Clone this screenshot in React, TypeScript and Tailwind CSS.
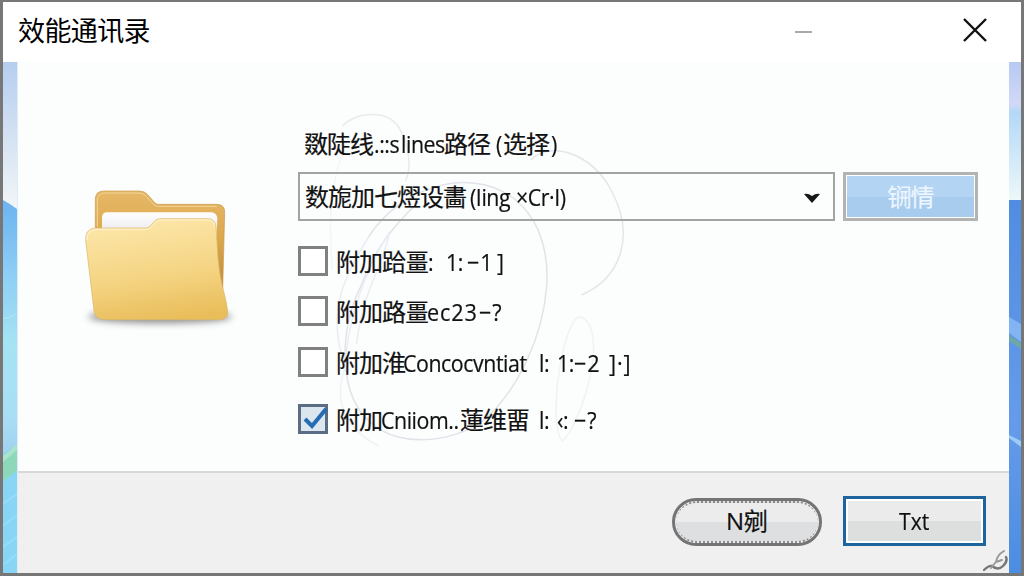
import { useState } from "react";
import clsx from "clsx";

type Part = { text: string; width: number; latin?: boolean; wide?: boolean };

const labelParts: Part[] = [
  { text: "敪陡线", width: 70 },
  { text: ".::s", width: 27, latin: true },
  { text: "lines", width: 43, latin: true },
  { text: "路径", width: 52 },
  { text: "(", width: 7, latin: true },
  { text: "选择", width: 48 },
  { text: ")", width: 8, latin: true },
];

const selectParts: Part[] = [
  { text: "数旎加七熤设畵", width: 165 },
  { text: "(Iing", width: 46, latin: true },
  { text: "×Cr·I)", width: 52, latin: true },
];

const initialOptions: { id: number; checked: boolean; gap: string; parts: Part[] }[] = [
  {
    id: 1,
    checked: false,
    gap: "mb-[19px]",
    parts: [
      { text: "附加跲畺", width: 92 },
      { text: ":", width: 18, latin: true },
      { text: "1:", width: 21, latin: true },
      { text: "−1", width: 30, wide: true },
      { text: "]", width: 8, latin: true },
    ],
  },
  {
    id: 2,
    checked: false,
    gap: "mb-5",
    parts: [
      { text: "附加路畺", width: 91 },
      { text: "ec23", width: 52, wide: true },
      { text: "−?", width: 28, wide: true },
    ],
  },
  {
    id: 3,
    checked: false,
    gap: "mb-[26px]",
    parts: [
      { text: "附加淮", width: 67 },
      { text: "Concocvntiat", width: 136, latin: true },
      { text: "l:", width: 18, latin: true },
      { text: "1:", width: 17, latin: true },
      { text: "−2", width: 35, wide: true },
      { text: "]·]", width: 28, wide: true },
    ],
  },
  {
    id: 4,
    checked: true,
    gap: "",
    parts: [
      { text: "附加", width: 45 },
      { text: "Cniiom..", width: 79, latin: true },
      { text: "蓮维畱", width: 79 },
      { text: "l:", width: 18, latin: true },
      { text: "‹:", width: 17, latin: true },
      { text: "−?", width: 28, wide: true },
    ],
  },
];

function TextParts({ parts }: { parts: Part[] }) {
  return (
    <span className="flex whitespace-pre">
      {parts.map((part, i) => (
        <span
          key={i}
          className={clsx(
            "shrink-0",
            part.latin && "origin-left scale-x-[0.89] tracking-[-0.5px]",
            part.wide && "origin-left scale-x-[0.9] tracking-[1px]",
            !part.latin && !part.wide && "tracking-[-1px]"
          )}
          style={{ width: part.width }}
        >
          {part.text}
        </span>
      ))}
    </span>
  );
}

function FolderIcon() {
  return (
    <svg viewBox="0 0 540 510" className="w-[180px] h-[170px]">
      <defs>
        <linearGradient id="folderBack" x1="0" y1="0" x2="0" y2="1">
          <stop offset="0" stopColor="#e6b866" />
          <stop offset="0.45" stopColor="#dca94f" />
          <stop offset="1" stopColor="#c18b34" />
        </linearGradient>
        <linearGradient id="folderFront" x1="0.4" y1="0" x2="0.6" y2="1">
          <stop offset="0" stopColor="#fce6a9" />
          <stop offset="0.55" stopColor="#f5d584" />
          <stop offset="1" stopColor="#e9bd5a" />
        </linearGradient>
        <linearGradient id="folderPaper" x1="0" y1="0" x2="0" y2="1">
          <stop offset="0" stopColor="#ffffff" />
          <stop offset="1" stopColor="#dcdce4" />
        </linearGradient>
        <filter id="folderShadow" x="-20%" y="-100%" width="140%" height="300%">
          <feGaussianBlur stdDeviation="11" />
        </filter>
      </defs>
      <ellipse cx="270" cy="440" rx="215" ry="20" fill="#555" opacity="0.65" filter="url(#folderShadow)" />
      <path
        d="M76 190V88Q76 63 102 63H208Q224 63 234 75L255 99Q259 103 266 103H441Q465 104 464 128L458 360L430 330L90 200Z"
        fill="url(#folderBack)"
        stroke="#c89a4c"
        strokeWidth="2"
      />
      <path d="M82 170V92Q83 69 104 69H206Q220 69 229 79L251 104Q256 109 266 109H440" fill="none" stroke="#f3d59a" strokeWidth="3" />
      <path d="M96 180V142Q97 127 112 127H424Q440 128 442 145L440 200L300 230Z" fill="url(#folderPaper)" />
      <path
        d="M76 174H228Q237 174 243 166L254 153Q260 146 270 146H414Q436 147 438 170L444 262Q449 324 463 372Q469 395 473 423Q475 447 450 449H104Q76 448 72 423L47 211Q45 176 76 174Z"
        fill="url(#folderFront)"
        stroke="#d9b669"
        strokeWidth="2"
      />
      <path d="M51 210Q49 180 78 178H230Q240 177 247 168L257 156Q262 150 272 150H414Q432 151 434 170" fill="none" stroke="#fff3cf" strokeWidth="3" />
    </svg>
  );
}

function Watermark() {
  return (
    <svg viewBox="0 0 990 409" className="absolute inset-0 w-full h-full pointer-events-none" fill="none" strokeWidth="1.5">
      <path d="M324 64C337 50 366 48 378 62C390 78 394 105 387 119" stroke="#e6ebed" />
      <path d="M331 72C310 120 310 160 314 208" stroke="#f3f6f8" />
      <path d="M512 98C534 77 575 94 592 127C618 174 602 216 563 233" stroke="#e2e6e8" />
      <path d="M350 175C382 125 449 105 492 134C520 154 531 188 528 226C524 275 500 325 470 354C442 380 382 388 353 361C320 335 320 270 342 225C354 195 366 172 400 140" stroke="#dee4e8" />
      <path d="M371 170C340 218 327 275 327 305C306 250 328 210 350 175M371 170C365 205 345 225 338 282" stroke="#eaedf4" />
      <path d="M327 305C309 350 342 375 360 384" stroke="#eff2f4" />
      <path d="M563 255C545 250 528 363 544 379C562 363 592 270 563 255Z" stroke="#f0f2f3" />
    </svg>
  );
}

function LeftWallpaper() {
  return (
    <svg viewBox="0 0 15 511" preserveAspectRatio="none" className="w-[15px] h-full shrink-0 border-r border-[#dfecf7]">
      <defs>
        <linearGradient id="leftSky" x1="0" y1="0" x2="0" y2="145" gradientUnits="userSpaceOnUse">
          <stop offset="0" stopColor="#b5ceef" />
          <stop offset="1" stopColor="#f1f5f7" />
        </linearGradient>
        <linearGradient id="leftSea" x1="0" y1="0" x2="0" y2="1">
          <stop offset="0" stopColor="#6cb3ef" />
          <stop offset="0.28" stopColor="#8dcef6" />
          <stop offset="0.55" stopColor="#a5e4f3" />
          <stop offset="0.82" stopColor="#a8dff5" />
          <stop offset="1" stopColor="#a0cff0" />
        </linearGradient>
      </defs>
      <path d="M0 0H15V511H0Z" fill="url(#leftSky)" />
      <path d="M0 138Q8 142 15 147V400H0Z" fill="url(#leftSea)" />
      <path d="M0 257Q8 256 15 251" stroke="#b4e5f5" fill="none" />
      <path d="M0 392L15 382V511H0Z" fill="#88d5f6" />
      <path d="M0 394L15 382V409L0 419Z" fill="#8dd8bb" />
      <path d="M0 394L15 382V388L0 400Z" fill="#a9e3cc" />
      <path d="M0 442L15 432M0 464L15 453M0 485L15 475M0 503L15 492" stroke="#98dcf8" strokeWidth="2" />
    </svg>
  );
}

function RightWallpaper() {
  return (
    <svg viewBox="0 0 12 511" preserveAspectRatio="none" className="w-3 h-full shrink-0">
      <defs>
        <linearGradient id="rightSky" x1="0" y1="0" x2="0" y2="1">
          <stop offset="0" stopColor="#b6caf2" />
          <stop offset="0.3" stopColor="#d2d8f6" />
          <stop offset="0.36" stopColor="#b4d8f8" />
          <stop offset="1" stopColor="#edf8f8" />
        </linearGradient>
        <linearGradient id="rightSea" x1="0" y1="0" x2="0" y2="1">
          <stop offset="0" stopColor="#508de2" />
          <stop offset="0.6" stopColor="#659bea" />
          <stop offset="1" stopColor="#4b8de2" />
        </linearGradient>
      </defs>
      <path d="M0 0H12V139H0Z" fill="url(#rightSky)" />
      <path d="M0 138H12V511H0Z" fill="url(#rightSea)" />
      <path d="M0 255L12 262V280L0 271Z" fill="#82b4f3" />
      <path d="M0 273L12 281V287L0 279Z" fill="#6fa7a9" />
      <path d="M0 373L12 379V385L0 376Z" fill="#9bcbf6" />
    </svg>
  );
}

export default function App() {
  const [options, setOptions] = useState(initialOptions);

  const toggle = (id: number) => {
    setOptions((prev) => prev.map((o) => (o.id === id ? { ...o, checked: !o.checked } : o)));
  };

  return (
    <div className="w-[1024px] h-[576px] overflow-hidden flex flex-col border-t-2 border-x-[3px] border-b-[3px] border-[#777] bg-white text-[#111] font-['Open_Sans','Noto_Sans_CJK_SC',sans-serif] [-webkit-text-stroke:0.2px]">
      {/* Title bar */}
      <header className="h-[60px] shrink-0 flex items-center bg-white">
        <h1 className="pl-[15px] text-[27px] tracking-[-0.6px] leading-[58px] h-[60px] text-black [-webkit-text-stroke:0px]">效能通讯录</h1>
        <button className="ml-auto w-[17px] h-[2px] bg-[#aaa]" aria-label="Minimize" />
        <button className="ml-[150px] mr-[33px] mb-1" aria-label="Close">
          <svg viewBox="0 0 26 26" className="block w-[26px] h-[26px]" fill="none" stroke="#111" strokeWidth="2.4">
            <path d="M2 2L24 24M24 2L2 24" />
          </svg>
        </button>
      </header>

      <div className="flex-1 min-h-0 flex">
        <LeftWallpaper />

        <main className="flex-1 min-w-0 flex flex-col bg-[#fcfdfd]">
          <section className="relative h-[409px] shrink-0 flex">
            <Watermark />

            <div className="w-[280px] shrink-0 pl-[52px] pt-[108px]">
              <FolderIcon />
            </div>

            <div className="relative pt-[66px] text-2xl leading-8">
              <div className="pl-1.5 h-11">
                <TextParts parts={labelParts} />
              </div>

              <div className="flex gap-2">
                <button className="w-[537px] h-[49px] border-2 border-[#a3a3a3] flex items-center justify-between pl-[5px] pr-3 text-left">
                  <TextParts parts={selectParts} />
                  <svg viewBox="0 0 18 12" className="w-[18px] h-3 mt-0.5">
                    <path d="M1 2Q5 1 9 4Q13 1 17 2L9 11Z" fill="#161616" />
                  </svg>
                </button>
                <button className="w-[135px] h-[49px] border-[3px] border-[#b3b3b3] bg-white p-px">
                  <span className="flex items-center justify-center w-full h-full bg-linear-to-b from-[#b3d4f2] from-50% to-[#a8cced] to-50% text-[#edf6ff] tracking-[-1px]">
                    锎情
                  </span>
                </button>
              </div>

              <div className="mt-6">
                {options.map((option) => (
                  <label key={option.id} className={clsx("flex items-center h-[31px]", option.gap)}>
                    <input
                      type="checkbox"
                      checked={option.checked}
                      onChange={() => toggle(option.id)}
                      className="sr-only"
                    />
                    <span
                      className={clsx(
                        "w-[30px] h-[30px] shrink-0 border-[3px]",
                        option.checked ? "border-[#5a6d84] bg-[#dce6ef]" : "border-[#808080] bg-white"
                      )}
                    >
                      {option.checked && (
                        <svg viewBox="0 0 24 24" className="block w-6 h-6 overflow-visible" fill="none" stroke="#246db5" strokeWidth="4">
                          <path d="M4 12L11 19L25 2" />
                        </svg>
                      )}
                    </span>
                    <span className="pl-2 mt-0.5">
                      <TextParts parts={option.parts} />
                    </span>
                  </label>
                ))}
              </div>
            </div>
          </section>

          {/* Footer */}
          <footer className="flex-1 flex justify-end border-t-2 border-[#d8d8d8] bg-[#f0f0f0] text-2xl leading-8">
            <button className="mt-[25px] w-[150px] h-12 rounded-full border-[3px] border-[#747474] px-px bg-[#efefef]">
              <span className="flex items-center justify-center w-full h-full pb-0.5 rounded-full border-y-2 border-dotted border-[#8c8c8c] bg-linear-to-b from-[#ececec] from-50% to-[#dedfe0] to-50%">
                N剜
              </span>
            </button>
            <button className="mt-[23px] ml-[21px] w-[143px] h-[50px] border-[3px] border-[#1f649f] bg-white p-0.5">
              <span className="flex items-center justify-center w-full h-full bg-linear-to-b from-[#ebebeb] from-50% to-[#dddede] to-50%">
                <span className="scale-x-[0.88]">Txt</span>
              </span>
            </button>
            <div className="w-[23px] flex items-end justify-end">
              <svg viewBox="0 0 26 24" className="w-[26px] h-6 shrink-0" fill="none" strokeLinecap="round">
                <path d="M1 21Q6 16 9 17Q15 22 20 17Q25 12 23 8" stroke="#777" strokeWidth="2.4" />
                <path d="M21 2Q14 6 13 13L19 11M8 19L12 14" stroke="#999" strokeWidth="2" />
              </svg>
            </div>
          </footer>
        </main>

        <RightWallpaper />
      </div>
    </div>
  );
}
